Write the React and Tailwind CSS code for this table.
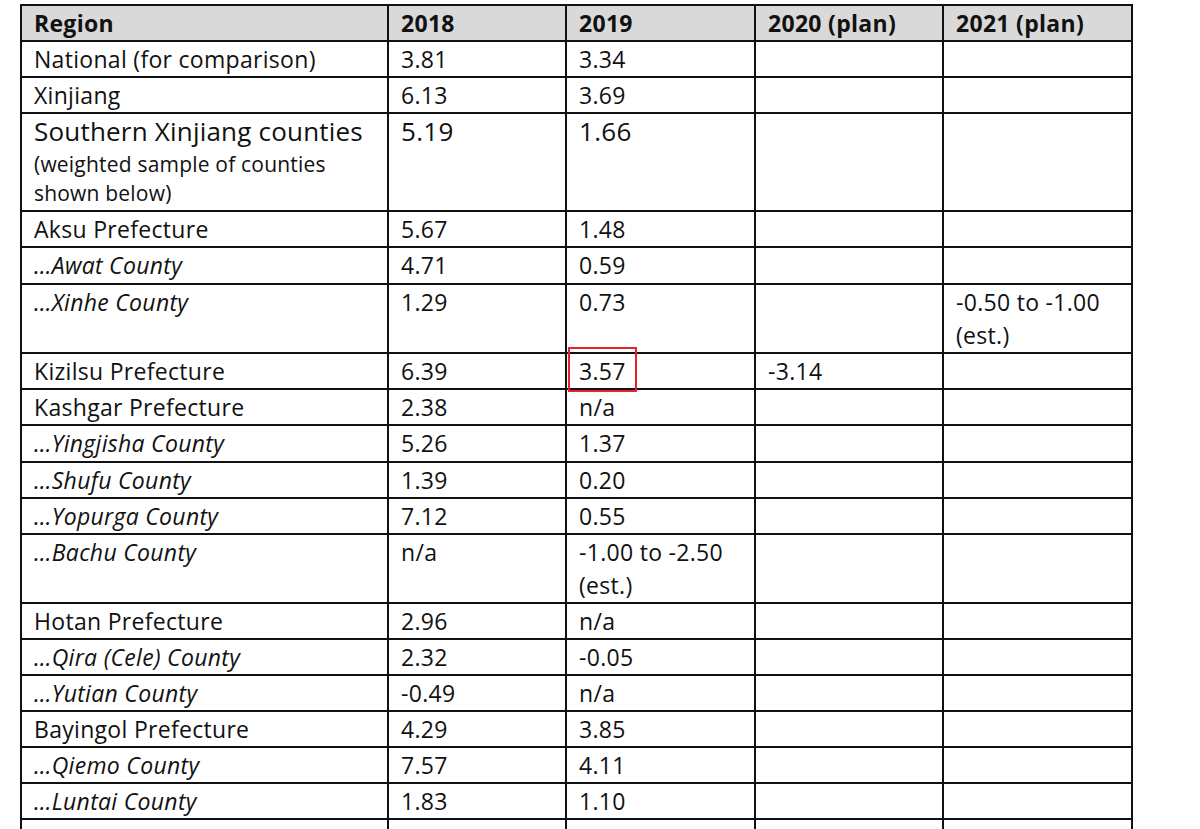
const rows = [
  { region: 'National (for comparison)', y18: '3.81', y19: '3.34', h: 'h-[36px]' },
  { region: 'Xinjiang', y18: '6.13', y19: '3.69', h: 'h-[36px]' },
  { region: 'Southern Xinjiang counties', note: '(weighted sample of counties shown below)', y18: '5.19', y19: '1.66', big: true, h: 'h-[98px]' },
  { region: 'Aksu Prefecture', y18: '5.67', y19: '1.48', h: 'h-[36px]' },
  { region: '…Awat County', county: true, y18: '4.71', y19: '0.59', h: 'h-[37px]' },
  { region: '…Xinhe County', county: true, y18: '1.29', y19: '0.73', y21: ['-0.50 to -1.00', '(est.)'], h: 'h-[67px]' },
  { region: 'Kizilsu Prefecture', y18: '6.39', y19: '3.57', y20: '-3.14', boxed: true, h: 'h-[36px]' },
  { region: 'Kashgar Prefecture', y18: '2.38', y19: 'n/a', h: 'h-[36px]' },
  { region: '…Yingjisha County', county: true, y18: '5.26', y19: '1.37', h: 'h-[37px]' },
  { region: '…Shufu County', county: true, y18: '1.39', y19: '0.20', h: 'h-[36px]' },
  { region: '…Yopurga County', county: true, y18: '7.12', y19: '0.55', h: 'h-[36px]' },
  { region: '…Bachu County', county: true, y18: 'n/a', y19: ['-1.00 to -2.50', '(est.)'], h: 'h-[68px]' },
  { region: 'Hotan Prefecture', y18: '2.96', y19: 'n/a', h: 'h-[36px]' },
  { region: '…Qira (Cele) County', county: true, y18: '2.32', y19: '-0.05', h: 'h-[36px]' },
  { region: '…Yutian County', county: true, y18: '-0.49', y19: 'n/a', h: 'h-[36px]' },
  { region: 'Bayingol Prefecture', y18: '4.29', y19: '3.85', h: 'h-[36px]' },
  { region: '…Qiemo County', county: true, y18: '7.57', y19: '4.11', h: 'h-[36px]' },
  { region: '…Luntai County', county: true, y18: '1.83', y19: '1.10', h: 'h-[36px]' },
  { region: '…Hejing County', county: true, y18: '2.26', y19: '2.58', h: 'h-[36px]' },
]

function Value({ v, big }) {
  if (!v) return null
  if (Array.isArray(v)) {
    return (
      <>
        {v.map((line) => (
          <div key={line}>{line}</div>
        ))}
      </>
    )
  }
  return <div className={big ? 'text-[26px]' : ''}>{v}</div>
}

const cell = 'border-2 border-[#111] px-[12px] align-top leading-[33px] pt-[1px]'

export default function App() {
  return (
    <div
      className="h-[829px] overflow-hidden bg-white text-[#111]"
      style={{ fontFamily: '"Open Sans", Lato, sans-serif' }}
    >
      <table className="ml-[20px] mt-[4px] w-[1112px] table-fixed border-collapse text-[23px] tracking-[0.3px]">
        <colgroup>
          <col className="w-[367px]" />
          <col className="w-[178px]" />
          <col className="w-[189px]" />
          <col className="w-[188px]" />
          <col className="w-[189px]" />
        </colgroup>
        <thead>
          <tr className="h-[36px] bg-[#d9d9d9] text-left font-bold">
            <th className={cell}>Region</th>
            <th className={cell}>2018</th>
            <th className={cell}>2019</th>
            <th className={cell}>2020 (plan)</th>
            <th className={cell}>2021 (plan)</th>
          </tr>
        </thead>
        <tbody>
          {rows.map((r) => (
            <tr key={r.region} className={r.h}>
              <td className={cell}>
                <div className={(r.county ? 'italic' : '') + (r.big ? ' text-[26px] tracking-[0.2px]' : '')}>
                  {r.region}
                </div>
                {r.note && (
                  <div className="pt-[2px] pr-[24px] text-[21px] leading-[29px] tracking-[0.2px]">{r.note}</div>
                )}
              </td>
              <td className={cell}>
                <Value v={r.y18} big={r.big} />
              </td>
              <td className={cell + ' relative'}>
                <Value v={r.y19} big={r.big} />
                {r.boxed && (
                  <div className="pointer-events-none absolute left-[1px] top-[-7px] z-10 h-[45px] w-[69px] border-2 border-[#e0252e]" />
                )}
              </td>
              <td className={cell}>
                <Value v={r.y20} />
              </td>
              <td className={cell}>
                <Value v={r.y21} />
              </td>
            </tr>
          ))}
        </tbody>
      </table>
    </div>
  )
}
